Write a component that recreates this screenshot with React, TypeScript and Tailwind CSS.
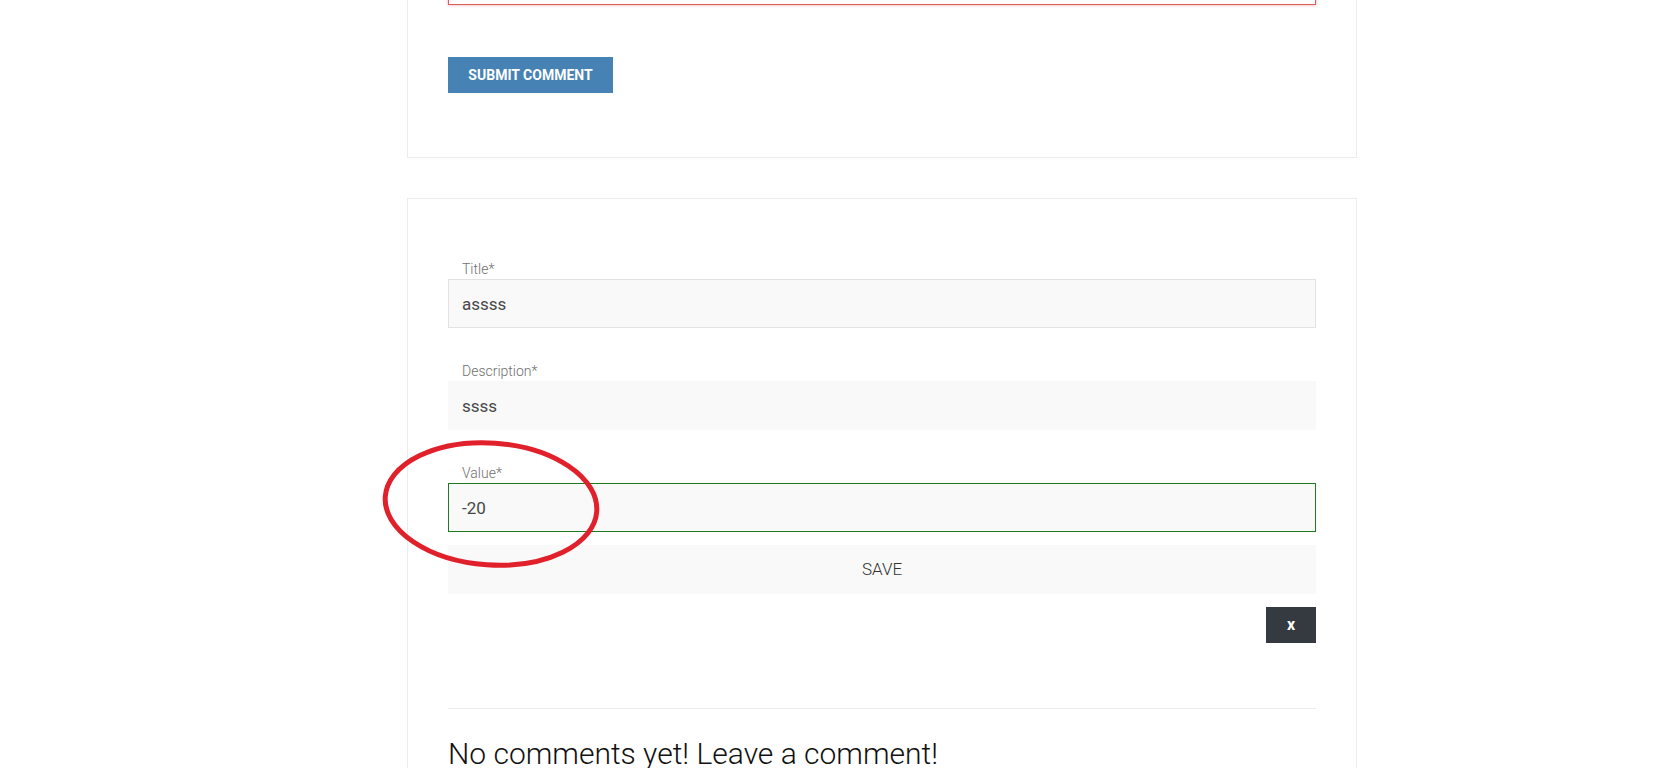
import React from "react";

const font = { fontFamily: "Roboto, 'Liberation Sans', sans-serif" };

function Field({
  label,
  value,
  variant,
  className,
}: {
  label: string;
  value: string;
  variant: "border" | "plain" | "valid";
  className?: string;
}) {
  const box =
    variant === "border"
      ? "border border-[#e2e2e2]"
      : variant === "valid"
      ? "border border-[#1f7a1f]"
      : "border border-[#f9f9f9]";
  return (
    <div className={className}>
      <div className="h-[20px] pl-[14px] text-[14px] leading-[20px] font-light text-[#6f6f6f]">{label}</div>
      <div className={`h-[49px] flex items-center bg-[#f9f9f9] px-[13px] pt-[2px] text-[17px] text-[#474747] ${box}`}>
        {value}
      </div>
    </div>
  );
}

export default function App() {
  return (
    <div className="relative min-h-[768px] w-[1664px] overflow-hidden bg-white" style={font}>
      <div className="-mt-[100px] ml-[407px] w-[950px]">
        {/* Card 1 (comment form, scrolled) */}
        <div className="border border-[#ececec] px-10 pb-[64px] pt-[20px]">
          <div className="h-[84px] border border-[#e05a5a] bg-white shadow-[0_0_3px_rgba(220,60,60,0.45)]" />
          <button className="mt-[52px] h-[36px] w-[165px] bg-[#4682b4] text-[14px] font-bold uppercase text-white">
            Submit comment
          </button>
        </div>

        {/* Card 2 */}
        <div className="mt-[40px] border border-[#ececec] px-10 pt-[60px] pb-10">
          <Field label="Title*" value="assss" variant="border" />
          <Field label="Description*" value="ssss" variant="plain" className="mt-[33px]" />
          <Field label="Value*" value="-20" variant="valid" className="mt-[33px]" />
          <button className="mt-[13px] flex h-[49px] w-full items-center justify-center bg-[#f9f9f9] pt-[1px] text-[17px] font-light text-[#333]">
            SAVE
          </button>
          <div className="mt-[13px] flex justify-end">
            <button className="h-[36px] w-[50px] bg-[#343a40] text-[16px] font-bold text-white">x</button>
          </div>
          <div className="mt-[65px] h-px bg-[#ececec]" />
          <h2 className="mt-[25px] text-[30px] leading-[40px] font-light text-[#111]">
            No comments yet! Leave a comment!
          </h2>
        </div>
      </div>

      {/* Red annotation ellipse */}
      <svg
        className="pointer-events-none absolute left-[380px] top-[437px]"
        width="222"
        height="134"
        viewBox="0 0 222 134"
      >
        <ellipse
          cx="111"
          cy="67"
          rx="106"
          ry="61"
          fill="none"
          stroke="#e0202a"
          strokeWidth="5"
          transform="rotate(4 111 67)"
        />
      </svg>
    </div>
  );
}
